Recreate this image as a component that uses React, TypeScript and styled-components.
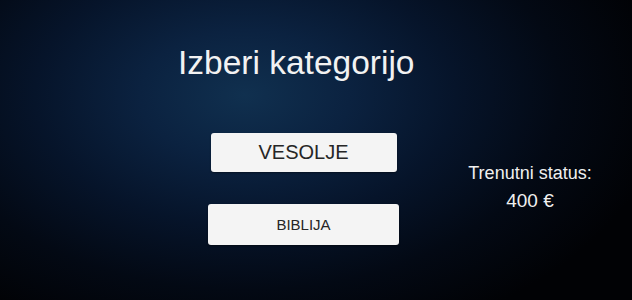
import React from "react";
import styled, { createGlobalStyle } from "styled-components";

const Global = createGlobalStyle`
  html, body { margin: 0; padding: 0; }
  body { font-family: "Liberation Sans", Arial, sans-serif; background: #000; }
`;

const Page = styled.div`
  width: 632px;
  height: 300px;
  box-sizing: border-box;
  padding-top: 46px;
  overflow: hidden;
  background: radial-gradient(
    ellipse 420px 260px at 245px 95px,
    #10304f 0%,
    #0b2240 25%,
    #06142a 50%,
    #030914 75%,
    #010205 100%
  );
  display: flex;
  flex-direction: column;
`;

const Title = styled.h1`
  margin: 0 0 0 178px;
  font-size: 33.5px;
  line-height: 33.5px;
  font-weight: 400;
  color: #f2f2f2;
  white-space: nowrap;
`;

const Body = styled.div`
  margin-top: 53px;
  display: flex;
  align-items: flex-start;
`;

const ButtonColumn = styled.div`
  margin-left: 208px;
  width: 191px;
  display: flex;
  flex-direction: column;
  align-items: center;
  gap: 32px;
`;

const CategoryButton = styled.button<{ $w: number; $h: number; $size: number }>`
  width: ${(p) => p.$w}px;
  height: ${(p) => p.$h}px;
  border: none;
  border-radius: 3px;
  background: #f4f4f4;
  color: #262626;
  font-family: "Liberation Sans", Arial, sans-serif;
  font-size: ${(p) => p.$size}px;
  display: flex;
  align-items: center;
  justify-content: center;
  padding: 0;
  box-shadow: 0 1px 2px rgba(0, 0, 0, 0.4);
`;

const Status = styled.div`
  margin-left: 61px;
  margin-top: 26px;
  width: 140px;
  display: flex;
  flex-direction: column;
  align-items: center;
  color: #f0f0f0;
`;

const StatusLine = styled.div<{ $size: number }>`
  font-size: ${(p) => p.$size}px;
  line-height: 28px;
  white-space: nowrap;
`;

export default function App() {
  return (
    <>
      <Global />
      <Page>
        <Title>Izberi kategorijo</Title>
        <Body>
          <ButtonColumn>
            <CategoryButton $w={186} $h={39} $size={20}>VESOLJE</CategoryButton>
            <CategoryButton $w={191} $h={41} $size={15}>BIBLIJA</CategoryButton>
          </ButtonColumn>
          <Status>
            <StatusLine $size={18}>Trenutni status:</StatusLine>
            <StatusLine $size={19}>400 €</StatusLine>
          </Status>
        </Body>
      </Page>
    </>
  );
}
